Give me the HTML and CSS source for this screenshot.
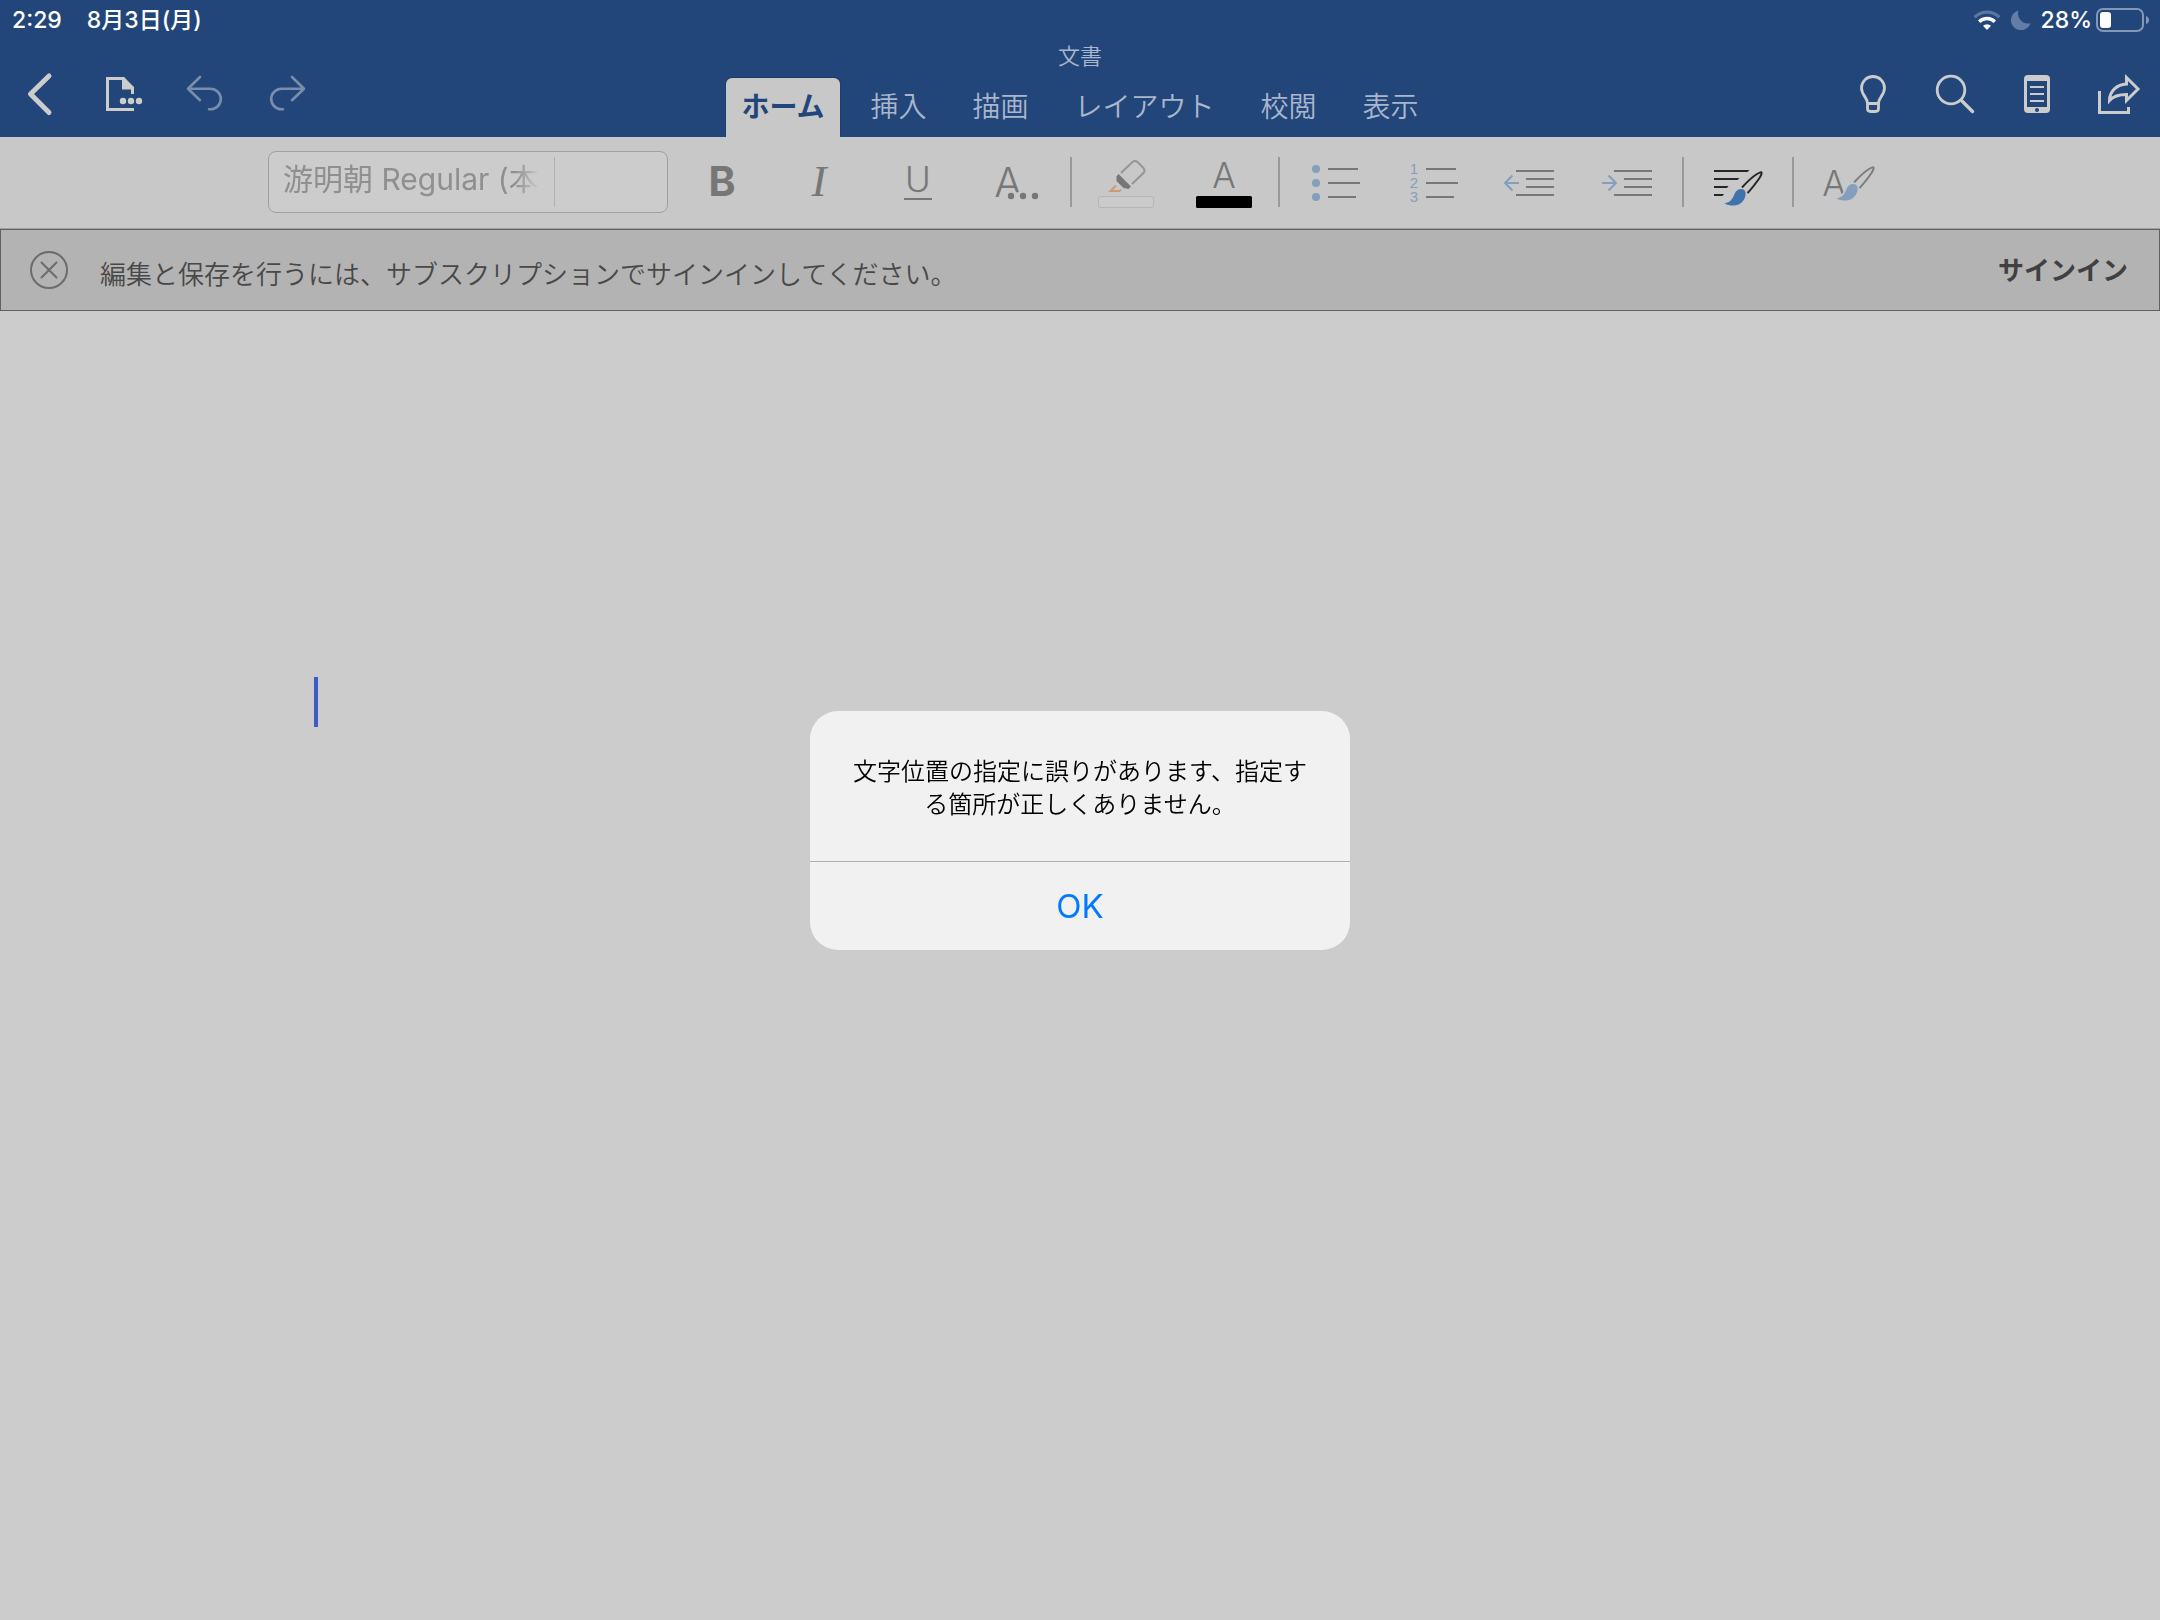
FILE: index.html
```html
<!DOCTYPE html>
<html lang="ja">
<head>
<meta charset="UTF-8">
<title>文書</title>
<link rel="stylesheet" href="styles.css">
</head>
<body>

<header class="header">
  <!-- ステータスバー -->
  <div class="status">
    <div class="status-left">
      <span>2:29</span>
      <span>8月3日(月)</span>
    </div>
    <div class="status-right">
      <svg class="wifi" width="28" height="22" viewBox="0 0 28 22" fill="none" stroke="#fff" stroke-width="3.4">
        <path d="M1.6 8.2a17.6 17.6 0 0 1 24.8 0" stroke="#5a759e"/>
        <path d="M6.2 12.8a11 11 0 0 1 15.6 0"/>
        <path d="M14 21l-4-4.2a5.8 5.8 0 0 1 8 0z" fill="#fff" stroke="none"/>
      </svg>
      <svg class="moon" width="20" height="20" viewBox="0 0 20 20">
        <path d="M7.5 0.5A10 10 0 1 0 19.5 13.2A10 10 0 0 1 7.5 0.5z" fill="#647da5"/>
      </svg>
      <span>28%</span>
      <svg class="battery" width="54" height="24" viewBox="0 0 54 24">
        <rect x="1" y="1" width="46" height="22" rx="6" fill="none" stroke="#8497b4" stroke-width="2"/>
        <rect x="4" y="4" width="11" height="16" rx="3" fill="#fff"/>
        <path d="M50 8q3 1 3 4t-3 4z" fill="#8497b4"/>
      </svg>
    </div>
  </div>

  <div class="nav">
    <div class="nav-icons">
      <button class="nav-btn" aria-label="戻る">
        <svg viewBox="0 0 60 60" fill="none" stroke="#ccc" stroke-width="5" stroke-linecap="round" stroke-linejoin="round">
          <path d="M38 12L19.500 30l18.500 18.500"/>
        </svg>
      </button>
      <button class="nav-btn" aria-label="ファイル">
        <svg viewBox="0 0 60 60" fill="none" stroke="#ccc" stroke-width="3">
          <path d="M41 45.500H14.500v-31H30.500L39.500 24V30"/>
          <path d="M29 14v11.500h12v-2.500L31 14z" fill="#ccc" stroke="none"/>
          <g fill="#ccc" stroke="none">
            <circle cx="30" cy="37" r="3.200"/><circle cx="38" cy="37" r="3.200"/><circle cx="46" cy="37" r="3.200"/>
          </g>
        </svg>
      </button>
      <button class="nav-btn" aria-label="元に戻す">
        <svg viewBox="0 0 60 60" fill="none" stroke="#7a8dac" stroke-width="2.600" stroke-linecap="round" stroke-linejoin="round">
          <path d="M25 13L13 24.700L25 36.200M13 24.700H35.500a10.300 10.300 0 0 1 0 20.600H34"/>
        </svg>
      </button>
      <button class="nav-btn" aria-label="やり直し">
        <svg viewBox="0 0 60 60" fill="none" stroke="#7a8dac" stroke-width="2.600" stroke-linecap="round" stroke-linejoin="round">
          <path d="M35 13L47 24.700L35 36.200M47 24.700H24.500a10.300 10.300 0 0 0 0 20.600H26"/>
        </svg>
      </button>
    </div>

    <div class="nav-center">
      <div class="doc-title">文書</div>
      <nav class="tabs">
        <a href="#" class="tab active">ホーム</a>
        <a href="#" class="tab">挿入</a>
        <a href="#" class="tab">描画</a>
        <a href="#" class="tab">レイアウト</a>
        <a href="#" class="tab">校閲</a>
        <a href="#" class="tab">表示</a>
      </nav>
    </div>

    <div class="nav-icons nav-right">
      <button class="nav-btn" aria-label="ヒント">
        <svg viewBox="0 0 60 60" fill="none" stroke="#ccc" stroke-width="2.800" stroke-linejoin="round">
          <path d="M24.500 39.500c0-6-6-8.500-6-15.500a11.500 11.500 0 0 1 23 0c0 7-6 9.500-6 15.500z"/>
          <path d="M24.500 39.500v5q0 3 3 3h5q3 0 3-3v-5"/>
        </svg>
      </button>
      <button class="nav-btn" aria-label="検索">
        <svg viewBox="0 0 60 60" fill="none" stroke="#ccc" stroke-width="2.800" stroke-linecap="round">
          <circle cx="26" cy="26" r="13.800"/>
          <path d="M36.500 36.500L47.500 47.500" stroke-width="3.400"/>
        </svg>
      </button>
      <button class="nav-btn" aria-label="モバイル表示">
        <svg viewBox="0 0 60 60">
          <rect x="17" y="11" width="26" height="38" rx="4" fill="#ccc"/>
          <rect x="20" y="17" width="20" height="26" fill="#22457a"/>
          <path d="M23 23h14M23 30h14M23 37h14" stroke="#ccc" stroke-width="2"/>
          <circle cx="30" cy="46" r="2" fill="#22457a"/>
        </svg>
      </button>
      <button class="nav-btn" aria-label="共有">
        <svg viewBox="0 0 60 60" fill="none" stroke="#ccc" stroke-width="3">
          <path d="M10.500 27v21.500H39.500V43"/>
          <path d="M37.500 13.500V20C28 20.500 20.500 27 20.500 36.500C25 31.500 30 30.500 37.500 30.500V36.500L49 25z"/>
        </svg>
      </button>
    </div>
  </div>
</header>

<!-- 書式ツールバー -->
<div class="toolbar">
  <div class="font-box">
    <input class="font-name" type="text" aria-label="フォント" value="游明朝 Regular (本">
    <input class="font-size" type="text" aria-label="フォント サイズ" value="">
  </div>
  <button class="tool" aria-label="太字">
    <svg viewBox="0 0 60 60"><text class="letter bold" x="30" y="44">B</text></svg>
  </button>
  <button class="tool" aria-label="斜体">
    <svg viewBox="0 0 60 60"><text class="letter italic" x="29" y="44">I</text></svg>
  </button>
  <button class="tool" aria-label="下線">
    <svg viewBox="0 0 60 60">
      <text class="letter medium" x="30" y="40">U</text>
      <path d="M16 47h28" stroke="#777" stroke-width="2"/>
    </svg>
  </button>
  <button class="tool" aria-label="その他の書式">
    <svg viewBox="0 0 60 60">
      <text class="letter large" x="22" y="45">A</text>
      <circle cx="27" cy="45" r="6" fill="#c8c8c8"/>
      <circle cx="35" cy="44" r="5" fill="#c8c8c8"/>
      <g fill="#777"><circle cx="25" cy="44" r="3.200"/><circle cx="37" cy="44" r="3.200"/><circle cx="49" cy="44" r="3.200"/></g>
    </svg>
  </button>
  <span class="sep"></span>
  <button class="tool" aria-label="蛍光ペン">
    <svg viewBox="0 0 60 60" fill="none">
      <path d="M25 21L36.500 10q2.500-2 5 0L47.500 16q2 2.500 0 5L36 32" stroke="#959595" stroke-width="2"/>
      <path d="M22.500 22L35 34.500L32.500 37L27.500 36L20.500 29V24.500z" fill="#777"/>
      <path d="M20 33.500L14.500 39H23.500L25 37.500" stroke="#c99b79" stroke-width="2"/>
      <rect x="2.500" y="44.500" width="55" height="11" rx="1.500" fill="#cbcbcb" stroke="#b5b5b5"/>
    </svg>
  </button>
  <button class="tool" aria-label="フォントの色">
    <svg viewBox="0 0 60 60">
      <text class="letter medium" x="30" y="36">A</text>
      <rect x="2" y="44" width="56" height="12" rx="1.500" fill="#000"/>
    </svg>
  </button>
  <span class="sep"></span>
  <button class="tool" aria-label="箇条書き">
    <svg viewBox="0 0 60 60">
      <g fill="#839fbd"><circle cx="12" cy="17" r="4"/><circle cx="12" cy="31" r="4"/><circle cx="12" cy="45" r="4"/></g>
      <path d="M24 17h30M24 31h32M24 45h28" stroke="#777" stroke-width="2"/>
    </svg>
  </button>
  <button class="tool" aria-label="段落番号">
    <svg viewBox="0 0 60 60">
      <text class="num" x="12" y="22">1</text>
      <text class="num" x="12" y="36">2</text>
      <text class="num" x="12" y="50">3</text>
      <path d="M24 17h30M24 31h32M24 45h28" stroke="#777" stroke-width="2"/>
    </svg>
  </button>
  <button class="tool" aria-label="インデントを減らす">
    <svg viewBox="0 0 60 60" fill="none" stroke-width="2">
      <path d="M16 19h38M26 27h28M26 35h28M16 43h38" stroke="#777"/>
      <path d="M19 31H5.500M12.500 23.500L5 31l7.500 7.500" stroke="#839fbd"/>
    </svg>
  </button>
  <button class="tool" aria-label="インデントを増やす">
    <svg viewBox="0 0 60 60" fill="none" stroke-width="2">
      <path d="M16 19h38M26 27h28M26 35h28M16 43h38" stroke="#777"/>
      <path d="M4 31h13.500M10.500 23.500L18 31l-7.500 7.500" stroke="#839fbd"/>
    </svg>
  </button>
  <span class="sep"></span>
  <button class="tool" aria-label="段落書式">
    <svg viewBox="0 0 60 60" fill="none">
      <path d="M6 18H41.500L39.500 20H6zM6 26H31.500L29.500 28H6zM6 34H20.500L19 36H6zM6 42H16L14.500 44H6z" fill="#262626"/>
      <path d="M34 35.500C39 30 45 24.500 49 22Q53.500 19.500 53.500 20.500Q54 22 51.500 26C48 31 43.500 37 39.500 41" stroke="#262626" stroke-width="2"/>
      <path d="M16.500 51.500C23 50 25 46 26.500 42C28.500 37.500 32 36 35.500 37.500C38.500 39.500 38 44 36 47.500C32 54.500 23.500 55 16.500 51.500z" fill="#3f73ac"/>
    </svg>
  </button>
  <span class="sep"></span>
  <button class="tool" aria-label="スタイル">
    <svg viewBox="0 0 60 60" fill="none">
      <text class="letter medium" x="16" y="44">A</text>
      <g transform="translate(2 -5)">
        <path d="M34 35.500C39 30 45 24.500 49 22Q53.500 19.500 53.500 20.500Q54 22 51.500 26C48 31 43.500 37 39.500 41" stroke="#7d7d7d" stroke-width="2"/>
        <path d="M16.500 51.500C23 50 25 46 26.500 42C28.500 37.500 32 36 35.500 37.500C38.500 39.500 38 44 36 47.500C32 54.500 23.500 55 16.500 51.500z" fill="#839fbd" stroke="#c8c8c8" stroke-width="3" paint-order="stroke"/>
      </g>
    </svg>
  </button>
</div>

<!-- サインインの通知 -->
<div class="banner">
  <button class="close" aria-label="閉じる">
    <svg width="38" height="38" viewBox="0 0 38 38" fill="none" stroke="#6c6c6c" stroke-width="2" stroke-linecap="round">
      <circle cx="19" cy="19" r="18"/>
      <path d="M11.500 11.500l15 15M26.500 11.500l-15 15"/>
    </svg>
  </button>
  <p class="banner-text">編集と保存を行うには、サブスクリプションでサインインしてください。</p>
  <button class="signin">サインイン</button>
</div>

<main class="document">
  <div class="caret"></div>
</main>

<!-- アラート -->
<div class="overlay">
  <div class="alert" role="alertdialog" aria-labelledby="alertText">
    <p class="alert-text" id="alertText">文字位置の指定に誤りがあります、指定する箇所が正しくありません。</p>
    <button class="alert-ok">OK</button>
  </div>
</div>

</body>
</html>
```

FILE: styles.css
```css
* {
  box-sizing: border-box;
}
body {
  margin: 0;
  min-height: 100vh;
  display: flex;
  flex-direction: column;
  background: #ccc;
  font-family: Inter, "Noto Sans CJK JP", sans-serif;
}
button {
  margin: 0;
  padding: 0;
  border: none;
  background: none;
  font-family: inherit;
}
svg {
  display: block;
}

/* ヘッダー */
.header {
  background: #22457a;
}
.status {
  display: flex;
  justify-content: space-between;
  align-items: center;
  height: 40px;
  padding: 0 10px 0 12px;
  color: #fff;
  font-size: 23px;
  font-weight: 500;
  line-height: 40px;
}
.status-left {
  display: flex;
  align-items: baseline;
  gap: 25px;
}
.status-right {
  display: flex;
  align-items: center;
}
.moon {
  margin: 0 10px;
}
.battery {
  margin-left: 4px;
}
.nav {
  display: grid;
  grid-template-columns: 1fr auto 1fr;
  height: 97px;
}
.nav-icons {
  display: flex;
  padding-top: 24px;
}
.nav-right {
  justify-content: flex-end;
}
.nav-btn {
  display: flex;
  justify-content: center;
  width: 82px;
  height: 60px;
}
.nav-btn svg, .tool svg {
  width: 60px;
  height: 60px;
}
.nav-center {
  display: flex;
  flex-direction: column;
  justify-content: space-between;
  align-items: center;
}
.doc-title {
  color: #a9b6cb;
  font-family: "Noto Sans CJK JP", sans-serif;
  font-size: 22px;
  font-weight: 350;
  line-height: 28px;
}
.tabs {
  display: flex;
  gap: 16px;
}
.tab {
  padding: 0 15px;
  color: #a9b6cb;
  font-size: 28px;
  font-weight: 350;
  line-height: 59px;
  text-decoration: none;
}
.tab.active {
  border-radius: 6px 6px 0 0;
  background: #c8c8c8;
  box-shadow: 0 0 0 1px #1c3a67;
  clip-path: inset(-1px -1px 0 -1px);
  color: #22457a;
  font-weight: 700;
}

/* ツールバー */
.toolbar {
  display: flex;
  justify-content: center;
  align-items: center;
  height: 92px;
  padding: 0 0 1px 5px;
  border-bottom: 1px solid #a0a0a0;
  background: #c8c8c8;
}
.font-box {
  display: flex;
  align-items: center;
  width: 400px;
  height: 62px;
  margin-right: 5px;
  padding-left: 14px;
  border: 1px solid #a0a0a0;
  border-radius: 8px;
  background: #ccc;
}
.font-box input {
  min-width: 0;
  height: 50px;
  padding: 0 0 10px;
  border: none;
  outline: none;
  background: none;
  color: #8f8f8f;
  font-family: inherit;
  font-size: 30px;
}
.font-box .font-name {
  width: 257px;
  margin-right: 14px;
  -webkit-mask-image: linear-gradient(to right, #000 232px, transparent 257px);
  mask-image: linear-gradient(to right, #000 232px, transparent 257px);
}
.font-box .font-size {
  flex: 1;
  border-left: 1px solid #b0b0b0;
}
.tool {
  display: flex;
  justify-content: center;
  width: 98px;
}
.sep {
  width: 2px;
  height: 50px;
  margin: 0 5px;
  background: #999;
}
.letter {
  fill: #777;
  font-family: Inter, sans-serif;
  font-weight: 300;
  text-anchor: middle;
}
.letter.bold {
  font-size: 41px;
  font-weight: 700;
}
.letter.italic {
  font-family: "Liberation Serif", serif;
  font-size: 45px;
  font-style: italic;
}
.letter.medium {
  font-size: 35px;
}
.letter.large {
  font-size: 41px;
}
.num {
  fill: #839fbd;
  font-family: "Liberation Sans", sans-serif;
  font-size: 15px;
  text-anchor: middle;
}

/* 通知バー */
.banner {
  display: flex;
  align-items: center;
  height: 82px;
  padding: 0 31px 0 29px;
  border: 1px solid #606060;
  background: #b3b3b3;
}
.banner-text {
  flex: 1;
  margin: 0;
  padding: 4px 0 0 32px;
  color: #484848;
  font-size: 26px;
  font-weight: 350;
}
.signin {
  padding-bottom: 4px;
  color: #404040;
  font-size: 26px;
  font-weight: 700;
}

/* 文書 */
.document {
  flex: 1;
  padding: 366px 314px;
}
.caret {
  width: 4px;
  height: 50px;
  background: #3c5cc4;
}

/* アラート */
.overlay {
  position: fixed;
  inset: 0;
  display: flex;
  justify-content: center;
  align-items: center;
  padding-top: 40px;
}
.alert {
  width: 540px;
  border-radius: 28px;
  background: #f1f1f1;
  overflow: hidden;
}
.alert-text {
  margin: 0;
  padding: 44px 38px 40px;
  color: #000;
  font-size: 24px;
  font-weight: 350;
  line-height: 33px;
  text-align: center;
}
.alert-ok {
  width: 100%;
  height: 89px;
  border-top: 1px solid #b0b0b0;
  color: #007aff;
  font-size: 33px;
}
```
